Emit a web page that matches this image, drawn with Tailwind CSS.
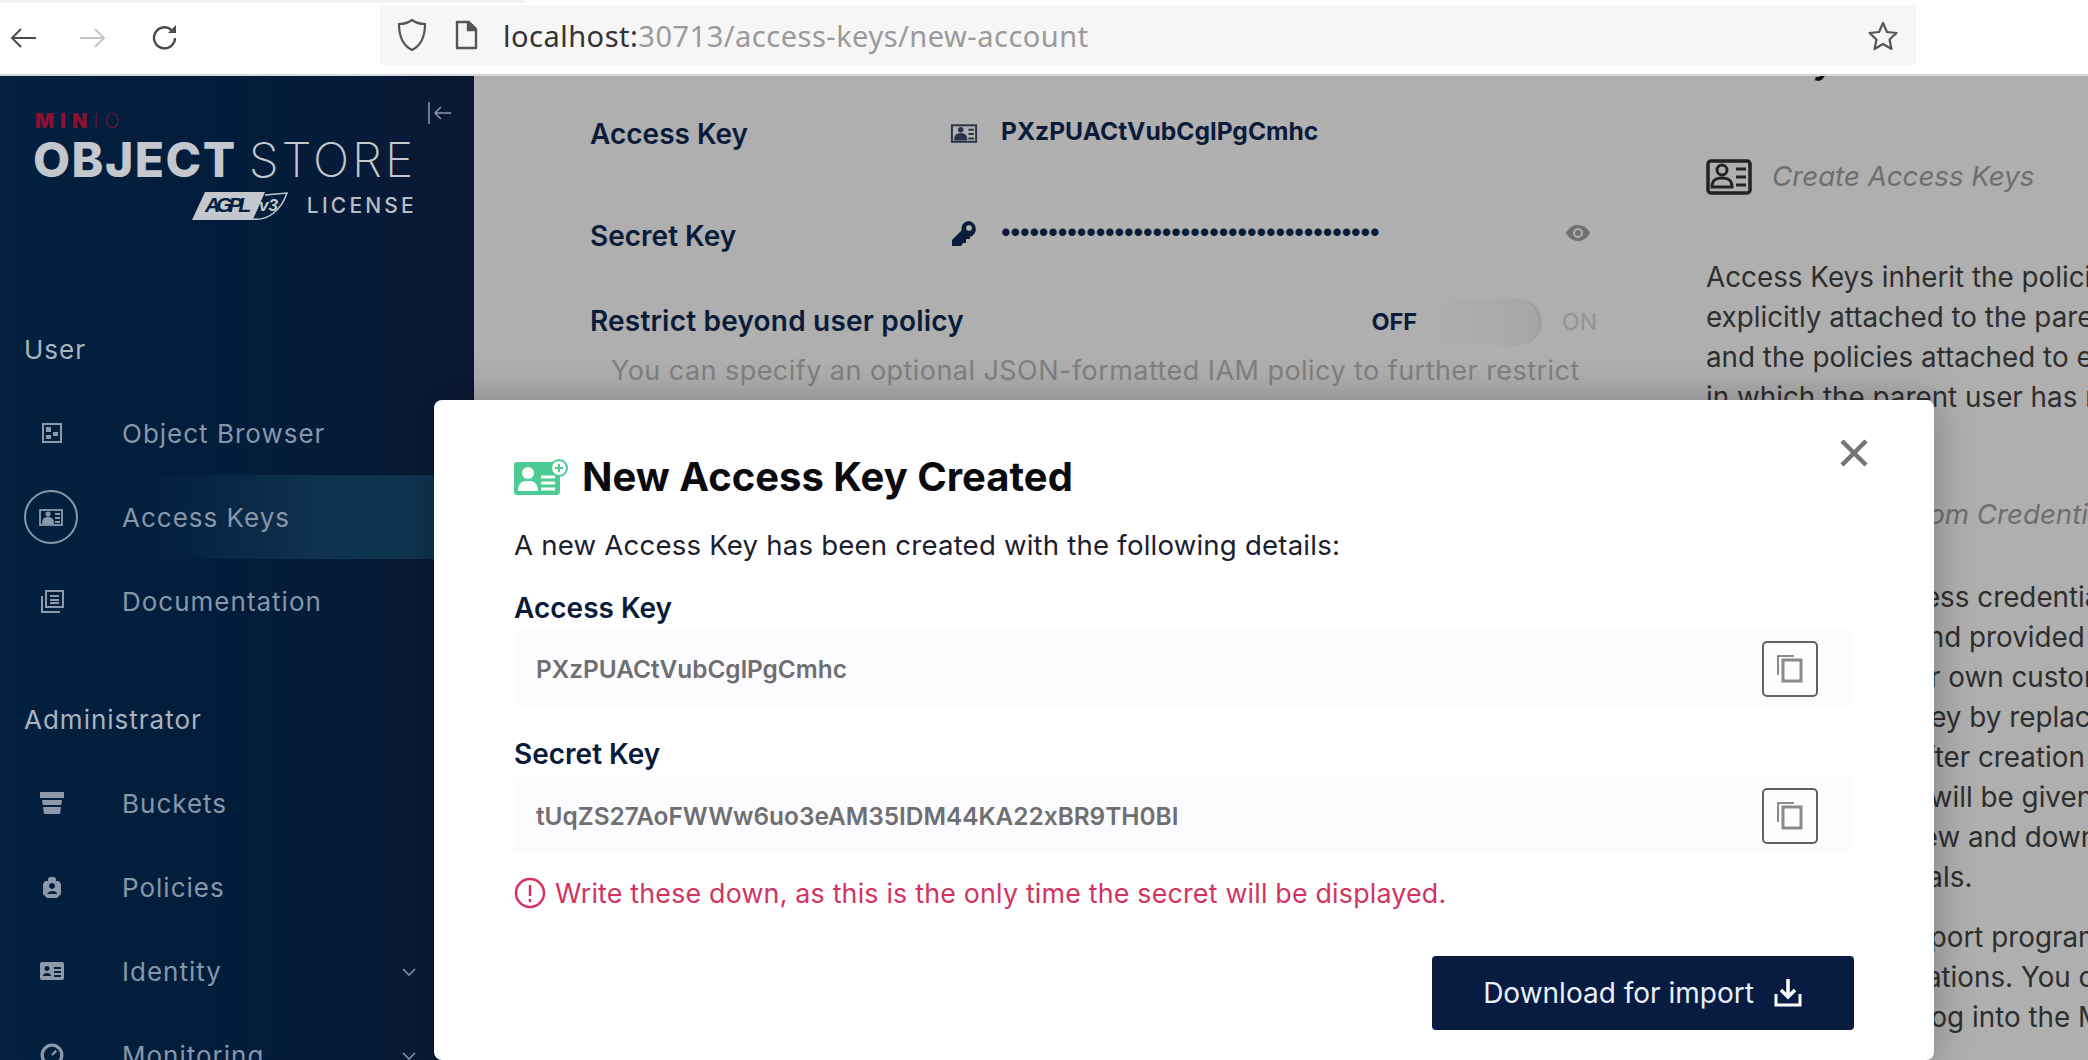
<!DOCTYPE html>
<html lang="en">
<head>
  <meta charset="UTF-8" />
  <title>MinIO Console</title>
  <script src="https://cdn.jsdelivr.net/npm/@tailwindcss/browser@4"></script>
</head>
<body class="relative w-[2088px] h-[1060px] overflow-hidden bg-[#afafaf] font-['Inter',sans-serif]">

  <!-- browser toolbar -->
  <header class="h-[76px] bg-white border-b-2 border-[#d3d8dc] flex items-center relative z-20">
    <div class="absolute left-0 top-0 w-[525px] h-[3px] bg-[#f3f3f3]"></div>
    <div class="w-[285px] pl-[9px] pt-[2px] flex items-center text-[#444]">
      <svg class="w-[28px] h-[28px]" viewBox="0 0 28 28" fill="none" stroke="#4a4a4a" stroke-width="2"><path d="M27 14H3M12 5l-9 9 9 9"/></svg>
      <svg class="w-[28px] h-[28px] ml-[42px]" viewBox="0 0 28 28" fill="none" stroke="#c4c4c4" stroke-width="2"><path d="M1 14h24M16 5l9 9-9 9"/></svg>
      <svg class="w-[30px] h-[30px] ml-[43px]" viewBox="0 0 30 30" fill="none" stroke="#4a4a4a" stroke-width="2.4"><path d="M25 15a10.500 10.500 0 1 1-3.500-8"/><path d="M26 2v8h-8" fill="#4a4a4a" stroke="none"/></svg>
    </div>
    <div class="w-[1536px] h-[60px] -mt-[4px] bg-[#f6f6f7] flex items-center pl-[16px] pr-[17px] ml-[95px]">
      <svg class="w-[32px] h-[34px] shrink-0" viewBox="0 0 32 34" fill="none" stroke="#555" stroke-width="2.200"><path d="M16 2c4 3 8 4 13 4 0 12-3 21-13 26C6 27 3 18 3 6c5 0 9-1 13-4z"/></svg>
      <svg class="w-[26px] h-[30px] ml-[25px] shrink-0" viewBox="0 0 26 30" fill="none" stroke="#555" stroke-width="2.400"><path d="M4 2h12l7 7v19H4z" stroke-linejoin="round"/><path d="M15 2v8h8" fill="#555"/></svg>
      <div class="ml-[24px] mt-[2px] text-[29px] tracking-[0.5px] font-['Noto_Sans',sans-serif] text-[#9a9a9a] whitespace-nowrap"><span class="text-[#333]">localhost:</span>30713/access-keys/new-account</div>
      <svg class="w-[32px] h-[32px] ml-auto mt-[2px]" viewBox="0 0 32 32" fill="none" stroke="#555" stroke-width="2.200"><path d="M16 3l4 9 9.500 1-7 6.500 2 9.500-8.500-5-8.500 5 2-9.500-7-6.500 9.500-1z" stroke-linejoin="round"/></svg>
    </div>
  </header>

  <div class="flex h-[984px]">
    <!-- sidebar -->
    <aside class="w-[474px] shrink-0 h-full bg-gradient-to-r from-[#03203f] via-[#021d3b] to-[#0a1833] relative overflow-hidden">
      <svg class="absolute right-[21px] top-[25px] w-[26px] h-[24px]" viewBox="0 0 26 24" fill="none" stroke="#8e99a8" stroke-width="1.500"><path d="M2 1v22M24 12H8M14 6l-6 6 6 6"/></svg>

      <div class="pl-[33px] pt-[36px] h-[245px]">
        <div class="text-[20px] leading-[18px] tracking-[6px] pl-[2px] text-[#8c0f34]"><span class="font-black">MIN</span><span class="font-extralight">IO</span></div>
        <div class="text-[48px] leading-[52px] mt-[4px] text-[#c4c7cd] whitespace-nowrap flex"><span class="font-extrabold tracking-[1.500px]">OBJECT</span><span class="font-extralight ml-[12px] tracking-[2.900px]">STORE</span></div>
        <div class="flex items-center mt-[4px] w-[381px] justify-end">
          <svg class="w-[98px] h-[30px]" viewBox="0 0 98 30">
            <path d="M14 1h60L62 29H1z" fill="#c4c7cd"/>
            <path d="M62 28c14 2 28-8 34-26L74 4" fill="#03203f" stroke="#c4c7cd" stroke-width="1.500"/>
            <text x="14" y="21" font-family="Liberation Sans" font-size="21" font-style="italic" font-weight="700" fill="#03203f" textLength="46">AGPL</text>
            <text x="68" y="20" font-family="Liberation Sans" font-size="17" font-style="italic" font-weight="700" fill="#c4c7cd">v3</text>
          </svg>
          <span class="ml-[18px] text-[21px] font-medium tracking-[3.200px] mr-[-3px] text-[#b8bcc4]">LICENSE</span>
        </div>
      </div>

      <nav class="text-[26px] tracking-[1px] text-[#8796a9]">
        <div class="pl-[24px] h-[56px] flex items-center text-[#aab3bf]">User</div>
        <a class="h-[84px] mt-[14px] flex items-center"><span class="w-[122px] pr-[18px] flex justify-center">
          <svg class="w-[22px] h-[22px]" viewBox="0 0 22 22" fill="none" stroke="#8c99aa" stroke-width="2"><rect x="2" y="2" width="18" height="18"/><path d="M5 5h5v5H5zM12 10h5v4h-5zM5 13h5v4H5z" fill="#8c99aa" stroke="none"/></svg></span>
          <span>Object Browser</span></a>
        <a class="h-[84px] flex items-center bg-gradient-to-r from-transparent from-[30%] to-[#0f3450] to-[70%]"><span class="w-[122px] pr-[20px] flex justify-center">
          <span class="w-[54px] h-[54px] rounded-full border-2 border-[#8796a9] flex items-center justify-center">
          <svg class="w-[24px] h-[20px]" viewBox="0 0 24 20" fill="none" stroke="#8c99aa" stroke-width="1.800"><rect x="1" y="3" width="22" height="15"/><circle cx="9" cy="7" r="2.500" fill="#8c99aa" stroke="none"/><path d="M4 16c0-4 2-5 5-5s5 1 5 5zM16 7h5M16 11h5M16 15h5" fill="#8c99aa"/></svg></span></span>
          <span>Access Keys</span></a>
        <a class="h-[84px] flex items-center"><span class="w-[122px] pr-[18px] flex justify-center">
          <svg class="w-[24px] h-[24px]" viewBox="0 0 24 24" fill="none" stroke="#8c99aa" stroke-width="2"><rect x="6" y="2" width="17" height="16"/><path d="M2 7v16h18M10 7h9M10 11h9M10 14h9"/></svg></span>
          <span>Documentation</span></a>
        <div class="pl-[24px] h-[70px] mt-[41px] flex items-center text-[#aab3bf]">Administrator</div>
        <a class="h-[84px] mt-[7px] flex items-center"><span class="w-[122px] pr-[18px] flex justify-center">
          <svg class="w-[24px] h-[22px]" viewBox="0 0 24 22" fill="#8c99aa"><path d="M0 0h24v6H0zM2 8h20l-.7 5H2.700zM3 15h18l-1 7H4z"/></svg></span>
          <span>Buckets</span></a>
        <a class="h-[84px] flex items-center"><span class="w-[122px] pr-[18px] flex justify-center">
          <svg class="w-[18px] h-[22px]" viewBox="0 0 18 22" fill="#8c99aa"><path d="M5 5V3c0-3 8-3 8 0v2h3l2 3v10l-4 4H4l-4-4V8l2-3zM9 7a3 3 0 1 0 .01 0zM4 18h10c0-4-8-4-10 0z" fill-rule="evenodd"/></svg></span>
          <span>Policies</span></a>
        <a class="h-[84px] flex items-center relative"><span class="w-[122px] pr-[18px] flex justify-center">
          <svg class="w-[24px] h-[18px]" viewBox="0 0 24 18" fill="#8c99aa"><path d="M2 0h20a2 2 0 0 1 2 2v14a2 2 0 0 1-2 2H2a2 2 0 0 1-2-2V2a2 2 0 0 1 2-2zM7 4a2.500 2.500 0 1 0 .01 0zM3 14h8c0-4-8-4-8 0zM14 5v2h7V5zM14 9v2h7V9zM14 13v2h7v-2z" fill-rule="evenodd"/></svg></span>
          <span>Identity</span>
          <svg class="absolute right-[58px] top-[39px] w-[14px] h-[8px]" viewBox="0 0 14 8" fill="none" stroke="#8c99aa" stroke-width="1.500"><path d="M1 1l6 6 6-6"/></svg></a>
        <a class="h-[84px] flex items-center relative"><span class="w-[122px] pr-[18px] flex justify-center">
          <svg class="w-[24px] h-[24px]" viewBox="0 0 22 22" fill="none" stroke="#8c99aa" stroke-width="3"><circle cx="11" cy="11" r="9"/><path d="M11 11l4-4" stroke-width="2"/></svg></span>
          <span>Monitoring</span>
          <svg class="absolute right-[58px] top-[39px] w-[14px] h-[8px]" viewBox="0 0 14 8" fill="none" stroke="#8c99aa" stroke-width="1.500"><path d="M1 1l6 6 6-6"/></svg></a>
      </nav>
    </aside>

    <!-- page behind the dialog -->
    <main class="flex-1 flex overflow-hidden">
      <div class="w-[1232px] shrink-0 pl-[116px] pr-[95px] pt-[24px]">
        <div class="flex items-center h-[66px]">
          <div class="w-[342px] text-[28px] font-semibold text-[#0b1b3a] mt-[2px]">Access Key</div>
          <div class="flex-1 h-[66px] bg-[#b0b0b0] rounded-[3px] flex items-center pl-[18px]">
            <svg class="w-[28px] h-[22px] shrink-0" viewBox="0 0 24 20" fill="none" stroke="#2b3548" stroke-width="1.800"><rect x="1" y="3" width="22" height="15"/><circle cx="9" cy="7" r="2.500" fill="#2b3548" stroke="none"/><path d="M4 16c0-4 2-5 5-5s5 1 5 5zM16 7h5M16 11h5M16 15h5" fill="#2b3548"/></svg>
            <span class="ml-[23px] text-[24.600px] font-bold text-[#0b1b3a] -mt-[3px]">PXzPUACtVubCglPgCmhc</span>
          </div>
        </div>
        <div class="flex items-center h-[66px] mt-[34px]">
          <div class="w-[342px] text-[28px] font-semibold text-[#0b1b3a] mt-[5px]">Secret Key</div>
          <div class="flex-1 h-[66px] bg-[#b0b0b0] rounded-[3px] flex items-center pl-[18px] pr-[21px]">
            <svg class="w-[28px] h-[28px] shrink-0" viewBox="0 0 28 28" fill="#0b1b3a"><path d="M18 2a8 8 0 0 1 2 15.700V20h-4v4h-3l-2 3H2v-6l9.500-9.500A8 8 0 0 1 18 2zm1 4a3 3 0 1 0 .01 0z" fill-rule="evenodd"/></svg>
            <span class="ml-[23px] -mt-[5px] text-[24px] leading-none tracking-[-0.1px] font-black text-[#0b1b3a] whitespace-nowrap">••••••••••••••••••••••••••••••••••••••••</span>
            <svg class="ml-auto w-[24px] h-[16px]" viewBox="0 0 24 16" fill="#707070"><path d="M12 0c6 0 10 4 12 8-2 4-6 8-12 8S2 12 0 8c2-4 6-8 12-8zm0 3a5 5 0 1 0 .01 0z" fill-rule="evenodd"/><circle cx="12" cy="8" r="3"/></svg>
          </div>
        </div>
        <div class="flex items-center h-[46px] mt-[33px] pr-[14px]">
          <div class="text-[28px] -mt-[2px] font-semibold tracking-[0.2px] text-[#0b1b3a]">Restrict beyond user policy</div>
          <span class="ml-auto text-[23.500px] font-bold text-[#0b1b3a]">OFF</span>
          <span class="ml-[16px] w-[109px] h-[46px] rounded-r-full bg-gradient-to-r from-transparent to-[#a6a6a6] border-r-4 border-[#9f9f9f]"></span>
          <span class="ml-[20px] text-[23px] text-[#939393]">ON</span>
        </div>
        <p class="mt-[6px] pl-[21px] text-[27px] leading-[40px] tracking-[0.45px] whitespace-nowrap text-[#818181]">You can specify an optional JSON-formatted IAM policy to further restrict</p>
      </div>

      <!-- help panel -->
      <div class="flex-1 text-[27.800px] leading-[40px] text-[#2e2e2e] whitespace-nowrap">
        <div class="h-[40px] -mt-[36px] pl-[62px] text-[36px] font-semibold text-[#111]">Keys</div>
        <div class="flex items-center mt-[74px] h-[44px]">
          <svg class="w-[46px] h-[38px] shrink-0" viewBox="0 0 46 38" fill="none" stroke="#222" stroke-width="3.500"><rect x="2" y="4" width="42" height="32" rx="3"/><circle cx="16" cy="13" r="5" stroke-width="3"/><path d="M6 30c0-8 5-9 10-9s10 1 10 9zM30 12h10M30 20h10M30 28h10" stroke-width="3"/></svg>
          <em class="ml-[20px] text-[27.700px] text-[#6e6e6e]">Create Access Keys</em>
        </div>
        <div class="mt-[59px]">
          <div>Access Keys inherit the policies</div>
          <div>explicitly attached to the parent user</div>
          <div>and the policies attached to each group</div>
          <div>in which the parent user has membership.</div>
        </div>
        <div class="h-[40px] mt-[77px] pl-[66px] italic text-[27.700px] text-[#6e6e6e]">Assign Custom Credentials</div>
        <div class="mt-[43px]">
          <div>Randomized access credentials are</div>
          <div>recommended, and provided by default.</div>
          <div>You may use your own custom Access</div>
          <div>Key and Secret Key by replacing</div>
          <div>default values. After creation of any</div>
          <div>Access Key, you will be given the</div>
          <div>opportunity to view and download the</div>
          <div>account credentials.</div>
        </div>
        <div class="mt-[20px]">
          <div>Access Keys support programmatic</div>
          <div>access by applications. You cannot use</div>
          <div>a Access Key to log into the MinIO</div>
        </div>
      </div>
    </main>
  </div>

  <!-- dialog -->
  <section class="absolute left-[434px] top-[400px] w-[1500px] h-[660px] bg-white rounded-[8px] shadow-[0_0_40px_rgba(0,0,0,0.28)] pl-[80px] pr-[80px] z-10">
    <svg class="absolute right-[66px] top-[39px] w-[28px] h-[28px]" viewBox="0 0 28 28" stroke="#747474" stroke-width="4.500"><path d="M2 2l24 24M26 2L2 26"/></svg>
    <div class="flex items-center h-[48px] mt-[53px]">
      <svg class="w-[54px] h-[36px] shrink-0" viewBox="0 0 54 36"><rect x="0" y="3" width="46" height="33" rx="3" fill="#4ccb95"/><circle cx="14" cy="14" r="6" fill="#fff"/><path d="M4 32c0-9 5-10 10-10s10 1 10 10z" fill="#fff"/><path d="M27 18h14M27 24h14M27 30h14" stroke="#fff" stroke-width="3"/><circle cx="45" cy="9" r="8" fill="#fff" stroke="#4ccb95" stroke-width="2"/><path d="M45 5v8M41 9h8" stroke="#4ccb95" stroke-width="2"/></svg>
      <h1 class="ml-[14px] text-[40px] font-bold text-[#0b0b0f]">New Access Key Created</h1>
    </div>
    <p class="mt-[24px] text-[27.600px] leading-[40px] tracking-[0.2px] text-[#1b2030]">A new Access Key has been created with the following details:</p>

    <div class="mt-[25px] text-[28px] leading-[36px] font-semibold text-[#0b1b3a]">Access Key</div>
    <div class="mt-[4px] h-[76px] w-[1337px] bg-[#fcfbfd] flex items-center pl-[22px] pr-[33px]">
      <span class="text-[24.400px] mt-[2px] font-semibold text-[#6f6f72]">PXzPUACtVubCglPgCmhc</span>
      <span class="ml-auto w-[56px] h-[56px] mt-[2px] rounded-[5px] border-2 border-[#626262] bg-[#fefdff] flex items-center justify-center">
        <svg class="w-[26px] h-[28px]" viewBox="0 0 26 28" fill="none" stroke="#8a8a8a"><path d="M1 20V1h16" stroke="#666" stroke-width="1.500"/><rect x="6" y="5" width="18" height="21" stroke-width="3"/></svg>
      </span>
    </div>

    <div class="mt-[30px] text-[28px] leading-[36px] font-semibold text-[#0b1b3a]">Secret Key</div>
    <div class="mt-[5px] h-[76px] w-[1337px] bg-[#fcfbfd] flex items-center pl-[22px] pr-[33px]">
      <span class="text-[24.400px] mt-[2px] font-semibold text-[#6f6f72]">tUqZS27AoFWWw6uo3eAM35IDM44KA22xBR9TH0BI</span>
      <span class="ml-auto w-[56px] h-[56px] mt-[2px] rounded-[5px] border-2 border-[#626262] bg-[#fefdff] flex items-center justify-center">
        <svg class="w-[26px] h-[28px]" viewBox="0 0 26 28" fill="none" stroke="#8a8a8a"><path d="M1 20V1h16" stroke="#666" stroke-width="1.500"/><rect x="6" y="5" width="18" height="21" stroke-width="3"/></svg>
      </span>
    </div>

    <div class="flex items-center mt-[20px] h-[40px] text-[#d2335f]">
      <svg class="w-[32px] h-[32px] shrink-0" viewBox="0 0 32 32" fill="none" stroke="#d2335f" stroke-width="2.500"><circle cx="16" cy="16" r="14"/><path d="M16 8v11M16 22v3"/></svg>
      <span class="ml-[9px] text-[26.800px] tracking-[0.2px]">Write these down, as this is the only time the secret will be displayed.</span>
    </div>

    <div class="flex justify-end mt-[43px]">
      <button class="w-[422px] h-[74px] rounded-[4px] bg-[#081c42] text-[#eaf0fa] text-[28px] flex items-center justify-center gap-[19px]">
        Download for import
        <svg class="w-[30px] h-[30px]" viewBox="0 0 30 30" fill="none" stroke="#fff" stroke-width="3.500"><path d="M15 1v18M8 12l7 7 7-7"/><path d="M3 16v11h24V16" stroke-width="3"/></svg>
      </button>
    </div>
  </section>
</body>
</html>
